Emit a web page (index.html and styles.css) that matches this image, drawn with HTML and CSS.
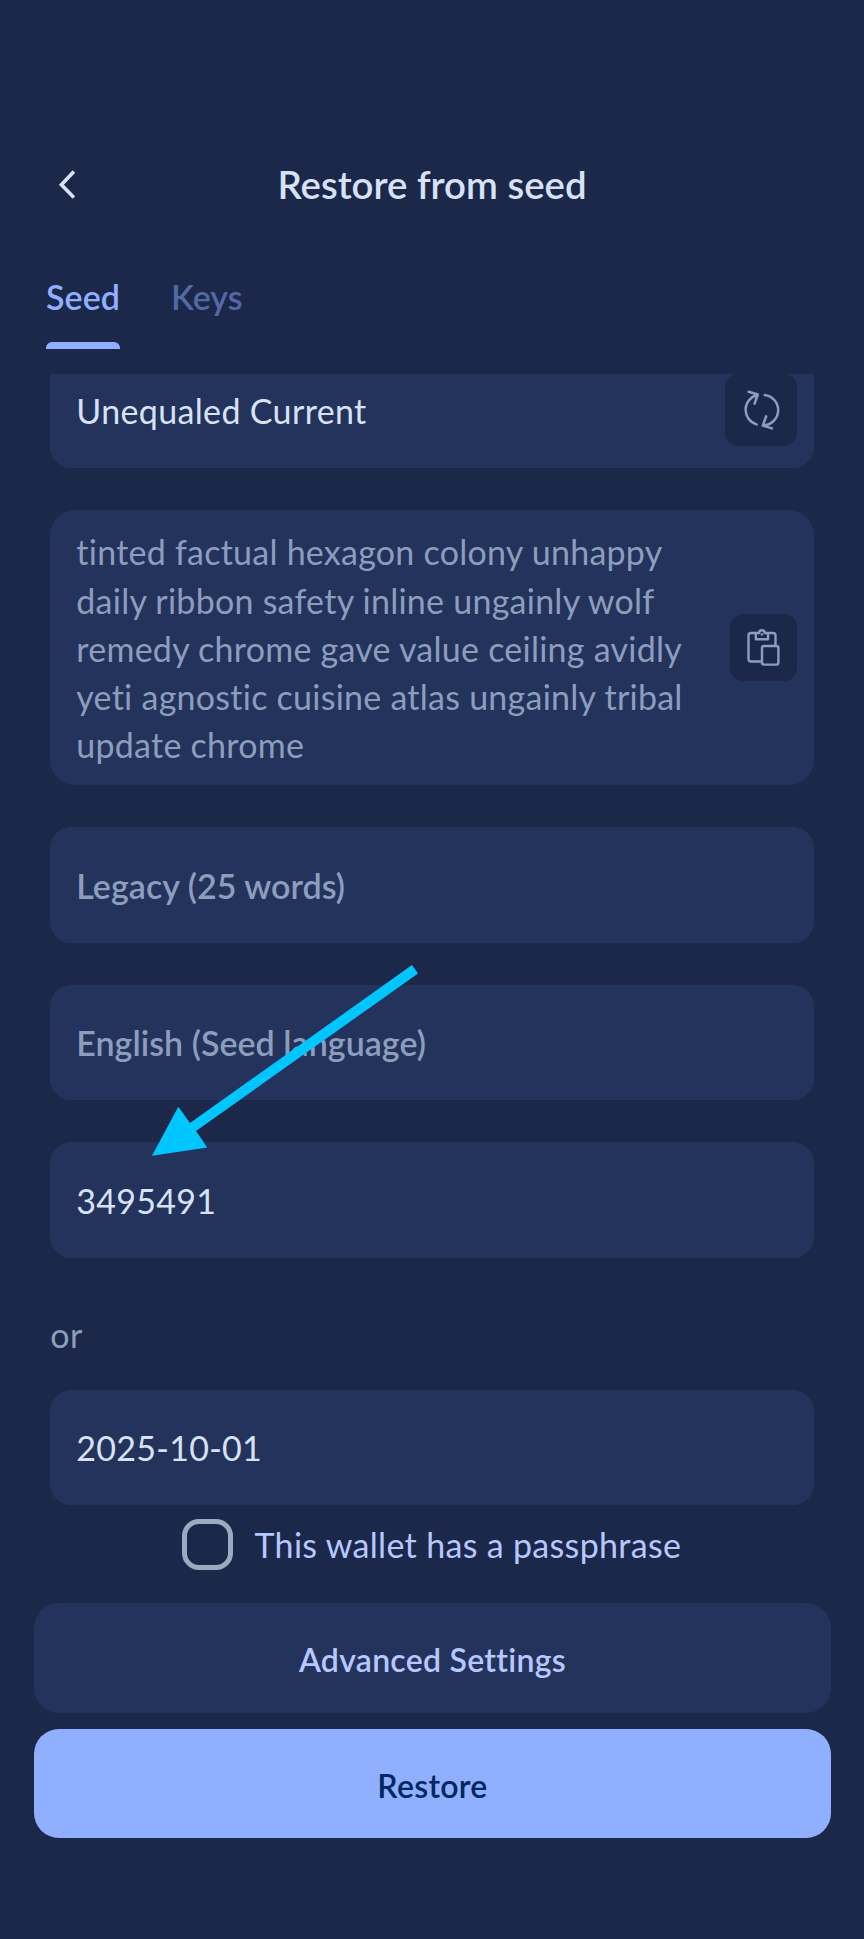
FILE: index.html
```html
<!DOCTYPE html>
<html lang="en">
<head>
<meta charset="utf-8">
<title>Restore from seed</title>
<link rel="stylesheet" href="styles.css">
</head>
<body>
<main class="screen">
  <header class="header">
    <svg class="back" width="20" height="32" viewBox="0 0 20 32" fill="none" stroke="currentColor" stroke-width="3.6"><path d="M16.9 2.6 4.4 15.8l12.5 12.8"/></svg>
    <h1 class="title">Restore from seed</h1>
  </header>
  <nav class="tabs">
    <a class="tab tab-active">Seed</a>
    <a class="tab">Keys</a>
  </nav>
  <section class="form">
    <div class="field field-name">
      <span class="name">Unequaled Current</span>
      <button class="icon-button refresh">
        <svg width="72" height="72" viewBox="0 0 72 72" fill="none" stroke="currentColor" stroke-width="2.5" stroke-linecap="round" stroke-linejoin="round"><path d="M31.6 50.4A15.2 15.2 0 0 1 32.3 21M23.6 17.8l9.2 2.7-3.2 9.2M39.7 21A15.2 15.2 0 0 1 38.3 51.3M47 54.4l-9.2-2.8 3.4-9.3"/></svg>
      </button>
    </div>
    <div class="field field-seed">
      <p class="seed">tinted factual hexagon colony unhappy<br>daily ribbon safety inline ungainly wolf<br>remedy chrome gave value ceiling avidly<br>yeti agnostic cuisine atlas ungainly tribal<br>update chrome</p>
      <button class="icon-button paste">
        <svg width="67" height="67" viewBox="0 0 67 67" fill="none" stroke="currentColor" stroke-width="2.4" stroke-linejoin="round"><path d="M25.8 19H21a2.5 2.5 0 0 0-2.5 2.5V45a2.5 2.5 0 0 0 2.5 2.5h11M38 19h5a2.5 2.5 0 0 1 2.5 2.5V32M25.8 19v6.2H38V19h-3.3a2.8 2.8 0 0 0-5.6 0ZM31.9 19.2v2.2"/><rect x="32" y="32" width="16.4" height="18.6" rx="2"/></svg>
      </button>
    </div>
    <div class="field choice">Legacy (25 words)</div>
    <div class="field choice">English (Seed language)</div>
    <div class="field value">3495491</div>
    <p class="or">or</p>
    <div class="field value">2025-10-01</div>
    <label class="passphrase"><span class="checkbox"></span>This wallet has a passphrase</label>
  </section>
  <footer class="actions">
    <button class="button secondary">Advanced Settings</button>
    <button class="button primary">Restore</button>
  </footer>
  <svg class="pointer" width="270" height="194" viewBox="0 0 270 194"><path fill="#00c6ff" d="M2 191.7 28.3 142.7 40 159 262 1l6 8.5L46 167l11.3 16.5Z"/></svg>
</main>
</body>
</html>
```
FILE: styles.css
```css
* { box-sizing: border-box; }

body {
  margin: 0;
  background: #1c2849;
  color: #d7e2f7;
  font: 400 34px/40px Lato, sans-serif;
}

h1, p { margin: 0; }

button {
  border: 0;
  padding: 0;
  font: inherit;
}

.screen {
  position: relative;
  display: flex;
  flex-direction: column;
  height: 1939px;
  overflow: hidden;
}

.header {
  display: grid;
  grid-template-columns: 80px 1fr 80px;
  align-items: center;
  height: 80px;
  margin-top: 144px;
}

.back { margin: 1px 0 0 57px; }

.title {
  padding-bottom: 1px;
  font-size: 38.4px;
  font-weight: 600;
  line-height: 46px;
  text-align: center;
}

.tabs {
  display: flex;
  gap: 51px;
  height: 125px;
  padding: 53px 46px 0;
  color: #5369a5;
  font-weight: 600;
}

.tab-active {
  display: flex;
  flex-direction: column;
  justify-content: space-between;
  width: 74px;
  color: #91afff;
  text-align: center;
}

.tab-active::after {
  content: "";
  height: 7px;
  border-radius: 6px 6px 0 0;
  background: #91afff;
}

.form {
  display: flex;
  flex-direction: column;
  height: 1229px;
  margin-top: 25px;
  padding: 0 50.3px;
  overflow: hidden;
}

.field {
  display: flex;
  flex-shrink: 0;
  align-items: center;
  justify-content: space-between;
  height: 115.5px;
  margin-bottom: 42px;
  padding: 2px 17px 0 26px;
  border-radius: 21px;
  background: #24335c;
}

.field-name {
  margin-top: -21.5px;
  padding-top: 0;
}

.name {
  padding-top: 2px;
  letter-spacing: 0.35px;
}

.field-seed {
  height: 275px;
  padding-top: 0;
  border-radius: 25px;
}

.seed {
  padding-top: 3px;
  color: #8c9dbd;
  letter-spacing: 0.25px;
  line-height: 48.25px;
  white-space: nowrap;
}

.icon-button {
  border-radius: 13px;
  background: #1c2849;
  color: #8c9dbd;
}

.icon-button svg { display: block; }

.choice {
  color: #8c9dbd;
  font-weight: 600;
  letter-spacing: 0.03px;
}

.value { letter-spacing: 0.28px; }

.or {
  margin: 15px 0 36px;
  color: #8c9dbd;
  letter-spacing: 0.5px;
  line-height: 39px;
}

.passphrase {
  display: flex;
  align-items: center;
  gap: 21.5px;
  height: 51px;
  margin: -28px 0 0 131.7px;
  color: #b7c7ff;
  letter-spacing: 0.32px;
}

.checkbox {
  width: 51px;
  height: 51px;
  border: 5px solid #9caac0;
  border-radius: 17px;
}

.actions {
  display: flex;
  flex-direction: column;
  gap: 16.5px;
  padding: 0.4px 33.5px 0;
}

.button {
  height: 109.3px;
  padding: 4px 0 0 1px;
  border-radius: 25px;
  font-size: 32px;
  font-weight: 600;
  letter-spacing: 0.28px;
}

.secondary {
  background: #24335c;
  color: #b7c7ff;
}

.primary {
  background: #91afff;
  color: #002860;
}

.pointer {
  position: absolute;
  left: 150px;
  top: 964px;
}
```
